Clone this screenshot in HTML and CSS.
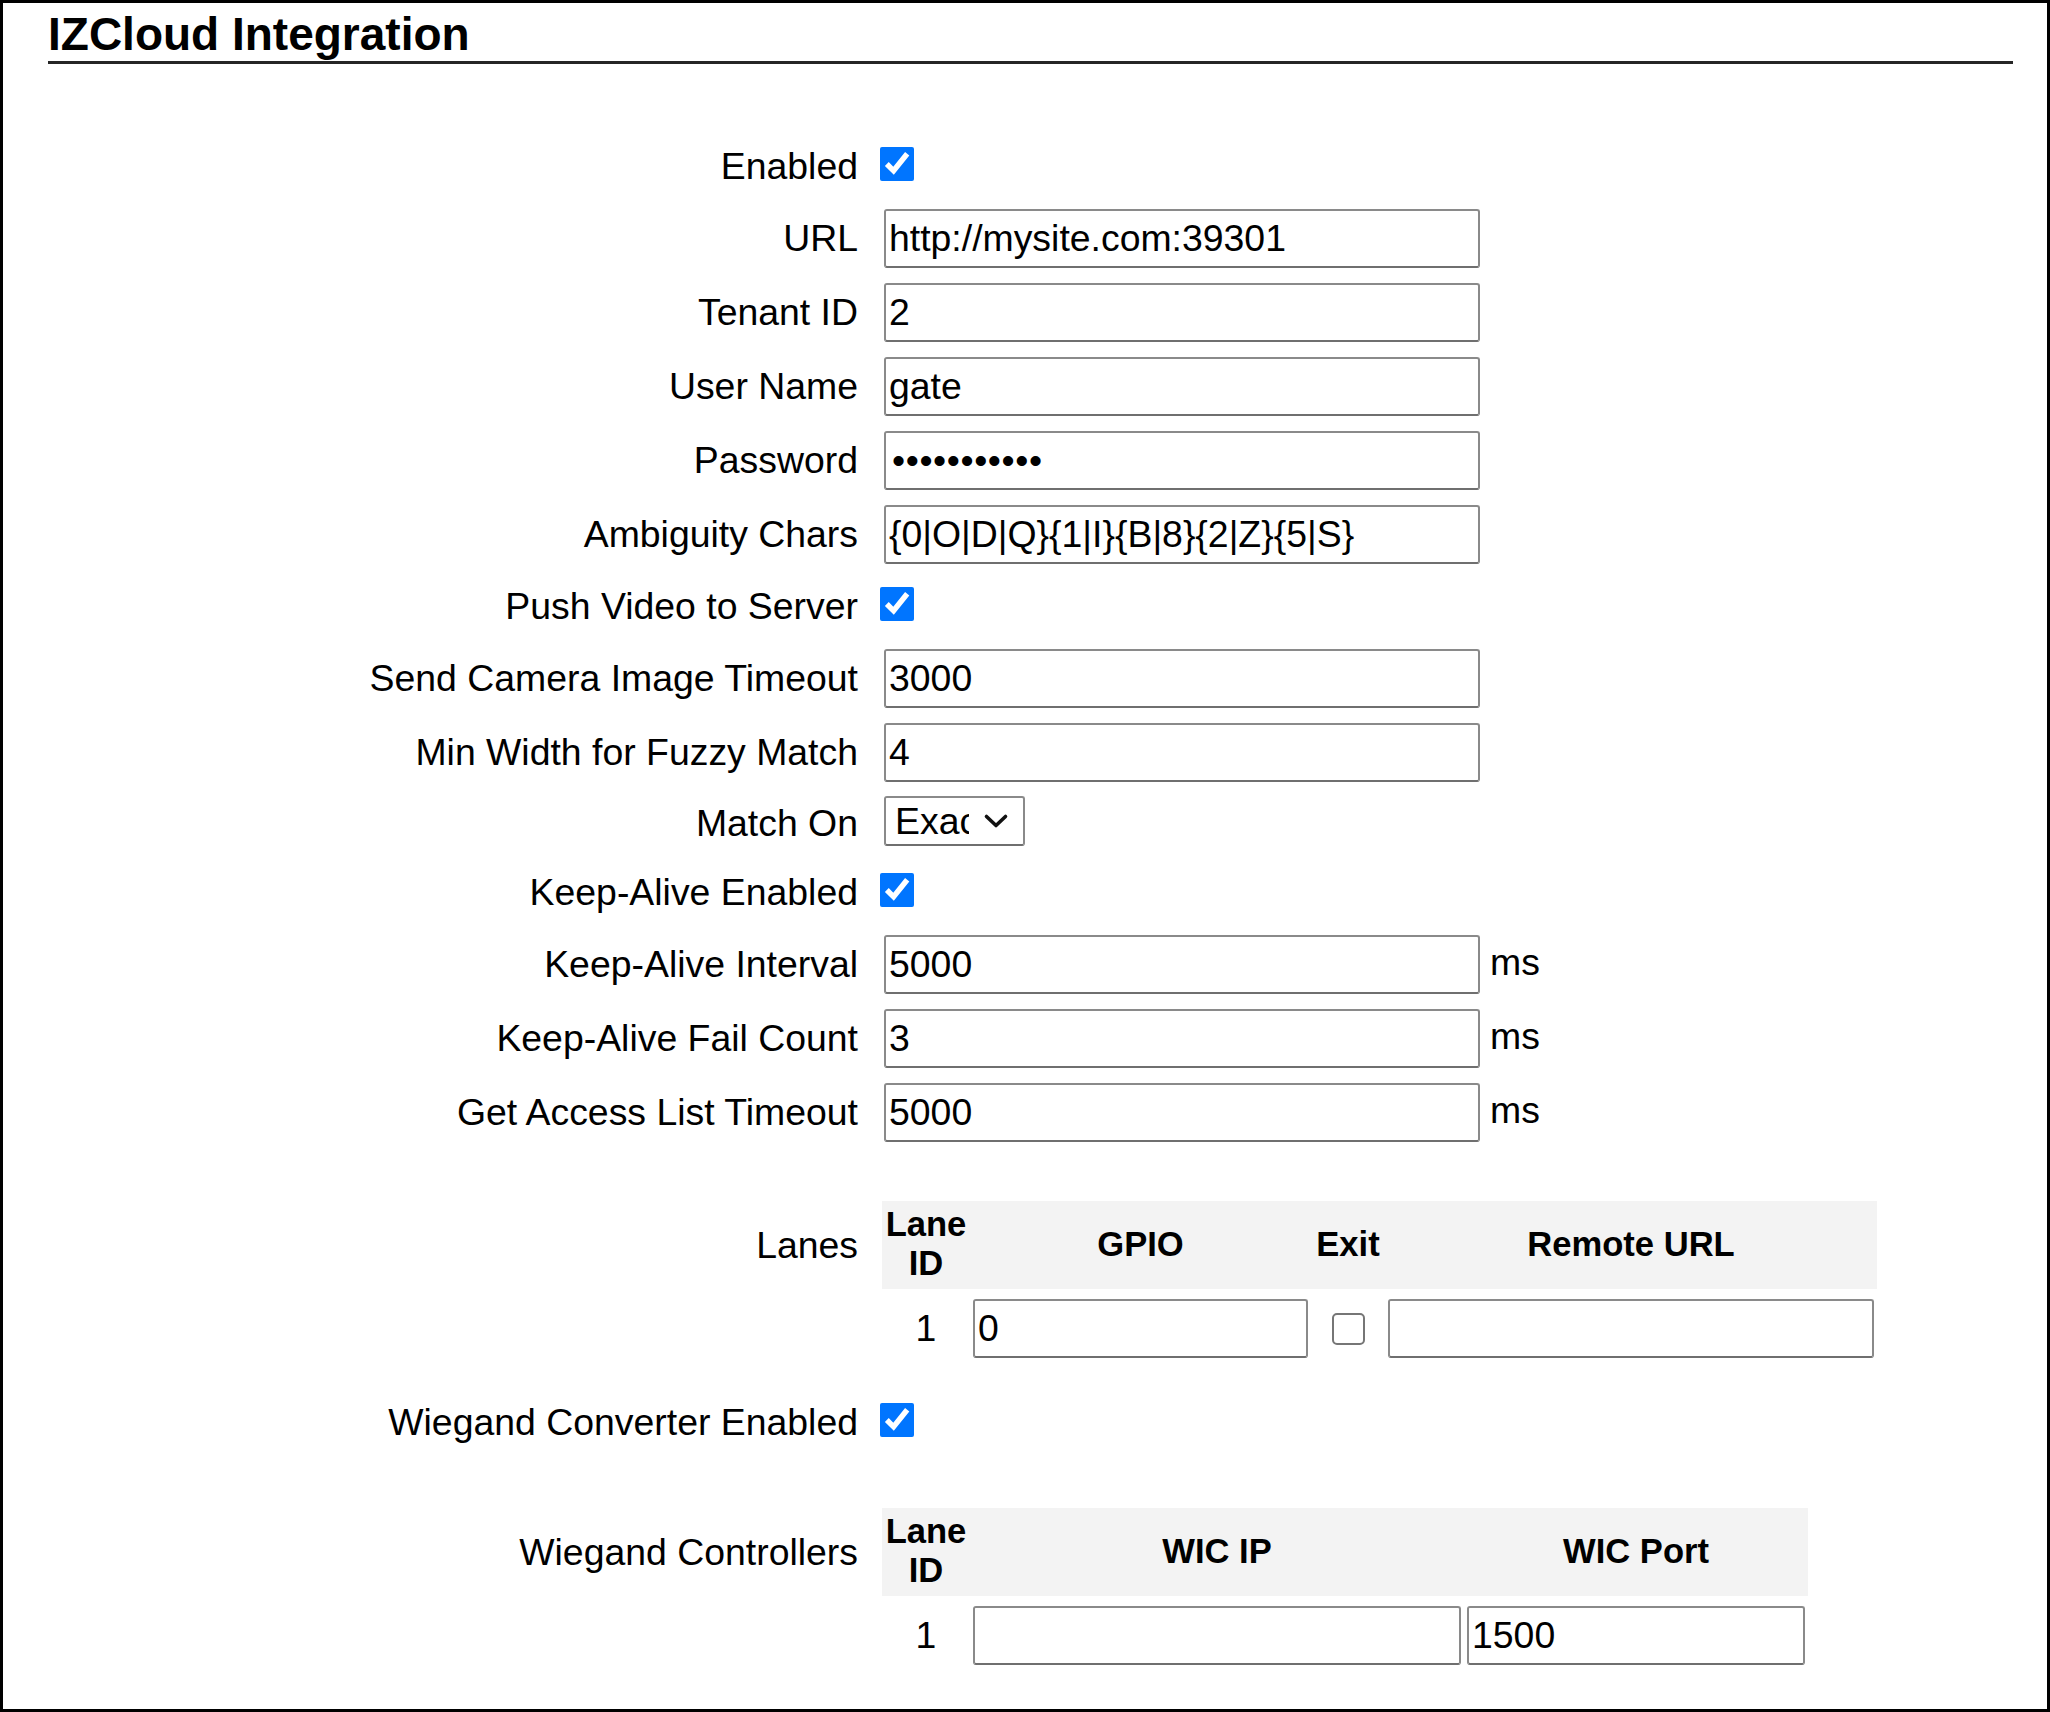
FILE: index.html
```html
<!DOCTYPE html>
<html lang="en">
<head>
<meta charset="utf-8">
<title>IZCloud Integration</title>
<link rel="stylesheet" href="styles.css">
</head>
<body>
<div class="page">
  <h1 class="title">IZCloud Integration</h1>
  <div class="form">
    <div class="row row-cb"><label class="lbl">Enabled</label><div class="ctl"><input type="checkbox" class="cb" checked></div></div>
    <div class="row"><label class="lbl">URL</label><div class="ctl"><input type="text" class="txt" value="http://mysite.com:39301"></div></div>
    <div class="row"><label class="lbl">Tenant ID</label><div class="ctl"><input type="text" class="txt" value="2"></div></div>
    <div class="row"><label class="lbl">User Name</label><div class="ctl"><input type="text" class="txt" value="gate"></div></div>
    <div class="row"><label class="lbl">Password</label><div class="ctl"><input type="password" class="txt pw" value="passwordxx1"></div></div>
    <div class="row"><label class="lbl">Ambiguity Chars</label><div class="ctl"><input type="text" class="txt" value="{0|O|D|Q}{1|I}{B|8}{2|Z}{5|S}"></div></div>
    <div class="row row-cb"><label class="lbl">Push Video to Server</label><div class="ctl"><input type="checkbox" class="cb" checked></div></div>
    <div class="row"><label class="lbl">Send Camera Image Timeout</label><div class="ctl"><input type="text" class="txt" value="3000"></div></div>
    <div class="row"><label class="lbl">Min Width for Fuzzy Match</label><div class="ctl"><input type="text" class="txt" value="4"></div></div>
    <div class="row row-sel"><label class="lbl">Match On</label><div class="ctl"><span class="sel-wrap"><select class="sel"><option>Exact</option><option>Fuzzy</option></select><svg class="chev" width="26" height="16" viewBox="0 0 26 16"><path d="M3.5 3.5 L13 12.5 L22.5 3.5" fill="none" stroke="#111" stroke-width="3.6" stroke-linecap="round" stroke-linejoin="round"/></svg></span></div></div>
    <div class="row row-cb"><label class="lbl">Keep-Alive Enabled</label><div class="ctl"><input type="checkbox" class="cb" checked></div></div>
    <div class="row"><label class="lbl">Keep-Alive Interval</label><div class="ctl"><input type="text" class="txt" value="5000"><span class="unit">ms</span></div></div>
    <div class="row"><label class="lbl">Keep-Alive Fail Count</label><div class="ctl"><input type="text" class="txt" value="3"><span class="unit">ms</span></div></div>
    <div class="row"><label class="lbl">Get Access List Timeout</label><div class="ctl"><input type="text" class="txt" value="5000"><span class="unit">ms</span></div></div>

    <div class="row-table lanes-block">
      <label class="lbl lbl-table">Lanes</label>
      <table class="grid-table lanes">
        <colgroup><col class="c-id"><col class="c-gpio"><col class="c-exit"><col class="c-url"></colgroup>
        <thead><tr><th>Lane ID</th><th>GPIO</th><th>Exit</th><th>Remote URL</th></tr></thead>
        <tbody><tr><td class="id">1</td><td><input type="text" class="txt cell" value="0"></td><td class="center"><input type="checkbox" class="cb-off"></td><td><input type="text" class="txt cell" value=""></td></tr></tbody>
      </table>
    </div>

    <div class="row row-cb wiegand"><label class="lbl">Wiegand Converter Enabled</label><div class="ctl"><input type="checkbox" class="cb" checked></div></div>

    <div class="row-table ctrl-block">
      <label class="lbl lbl-table">Wiegand Controllers</label>
      <table class="grid-table ctrls">
        <colgroup><col class="c-id"><col class="c-ip"><col class="c-port"></colgroup>
        <thead><tr><th>Lane ID</th><th>WIC IP</th><th>WIC Port</th></tr></thead>
        <tbody><tr><td class="id">1</td><td><input type="text" class="txt cell" value=""></td><td><input type="text" class="txt cell" value="1500"></td></tr></tbody>
      </table>
    </div>
  </div>
</div>
</body>
</html>
```

FILE: styles.css
```css
html, body {
  margin: 0;
  padding: 0;
  background: #fff;
}

body {
  font-family: "Liberation Sans", Arial, sans-serif;
  color: #000;
}

.page {
  box-sizing: border-box;
  width: 2050px;
  height: 1712px;
  border: 3px solid #000;
  padding: 0 34px 0 45px;
  overflow: hidden;
}

.title {
  margin: 0;
  padding-top: 5px;
  font-size: 46px;
  font-weight: bold;
  line-height: 53px;
  border-bottom: 3px solid #262626;
}

.form {
  margin-top: 67px;
}

.row {
  display: grid;
  grid-template-columns: 810px auto;
  column-gap: 24px;
  align-items: center;
  height: 74px;
}

.row-cb {
  height: 70px;
}

.row-sel {
  height: 68px;
}

.lbl {
  text-align: right;
  font-size: 37.4px;
  white-space: nowrap;
}

.ctl {
  display: flex;
  align-items: center;
  gap: 10px;
  font-size: 37.4px;
}

.txt {
  box-sizing: border-box;
  width: 596px;
  height: 59px;
  margin: 0 0 0 2px;
  padding: 0 2px 0 3px;
  border: 2px solid #8a8a8a;
  border-bottom-color: #6f6f6f;
  border-radius: 3px;
  font-family: "Liberation Sans", Arial, sans-serif;
  font-size: 37.4px;
  color: #000;
  background: #fff;
  outline: none;
}

.txt.pw {
  padding-left: 6px;
  letter-spacing: 0.6px;
}

.unit {
  font-size: 37.4px;
  line-height: 1;
  padding-bottom: 2px;
}

.cb {
  width: 34px;
  height: 34px;
  margin: 0 0 5px -2px;
  accent-color: #0075ff;
}

.sel-wrap {
  position: relative;
  display: inline-block;
  margin-left: 2px;
  margin-bottom: 4px;
}

.sel {
  appearance: none;
  -webkit-appearance: none;
  box-sizing: border-box;
  display: block;
  width: 141px;
  height: 50px;
  margin: 0;
  padding: 0 54px 0 9px;
  border: 2px solid #8a8a8a;
  border-bottom-color: #6f6f6f;
  border-radius: 3px;
  background: #fff;
  font-family: "Liberation Sans", Arial, sans-serif;
  font-size: 37.4px;
  color: #000;
  outline: none;
}

.chev {
  position: absolute;
  right: 16px;
  top: 50%;
  transform: translateY(-50%);
  pointer-events: none;
}

.row-table {
  display: grid;
  grid-template-columns: 810px auto;
  column-gap: 24px;
  align-items: start;
}

.lbl-table {
  line-height: 88px;
}

.lanes-block {
  margin-top: 52px;
}

.wiegand {
  margin-top: 26px;
}

.ctrl-block {
  margin-top: 51px;
}

.grid-table {
  border-collapse: collapse;
  table-layout: fixed;
}

.lanes {
  width: 995px;
}

.ctrls {
  width: 926px;
}

.c-id { width: 88px; }
.c-gpio { width: 341px; }
.c-exit { width: 74px; }
.c-url { width: 492px; }
.c-ip { width: 494px; }
.c-port { width: 344px; }

.grid-table th {
  background: #f3f3f3;
  font-size: 34.6px;
  font-weight: bold;
  line-height: 39px;
  padding: 4px 3px 6px;
  text-align: center;
  vertical-align: middle;
}

.grid-table td {
  padding: 10px 3px 3px;
  font-size: 37.4px;
  vertical-align: middle;
}

.grid-table td.id {
  text-align: center;
}

.grid-table td.center {
  text-align: center;
}

.txt.cell {
  width: 100%;
  margin: 0;
}

.cb-off {
  appearance: none;
  -webkit-appearance: none;
  display: block;
  box-sizing: border-box;
  width: 33px;
  height: 32px;
  margin: 0 auto;
  border: 2px solid #767676;
  border-radius: 5px;
  background: #fff;
}
```
